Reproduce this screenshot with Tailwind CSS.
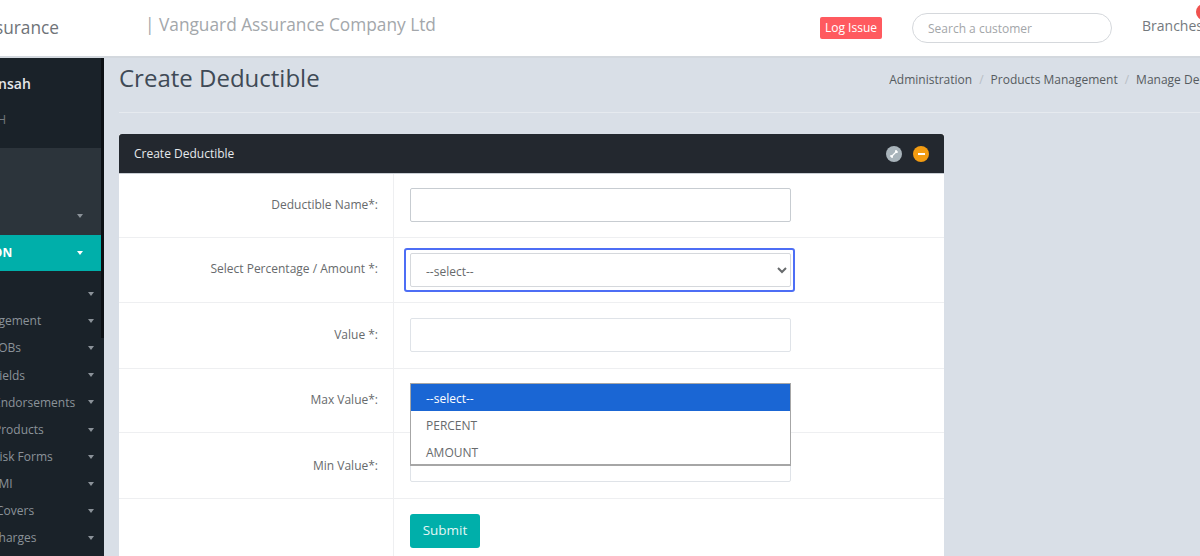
<!DOCTYPE html>
<html lang="en">
  <head>
    <meta charset="UTF-8" />
    <title>Create Deductible</title>
    <script src="https://cdn.jsdelivr.net/npm/@tailwindcss/browser@4"></script>
  </head>
  <body class="h-[556px] overflow-hidden bg-[#d9dfe7] font-['Open_Sans',sans-serif] text-[12px] text-[#676a6c]">
    <!-- page is scrolled sideways by 136px -->
    <div class="w-[1400px] -ml-[136px]">
      <header class="flex h-[58px] items-center border-b-2 border-[#d3d8de] bg-white">
        <div class="w-[195px] text-right text-[17.3px] text-[#6f7378]">Vanguard Assurance</div>
        <div class="ml-[88px] -mt-[6px] w-[673px] text-[17.3px] text-[#a3a7ab]"><span class="-ml-[2px]">| Vanguard Assurance Company Ltd</span></div>
        <span class="flex h-[22px] w-[62px] items-center justify-center rounded-[2px] bg-[#ff5a5f] text-white">Log Issue</span>
        <input class="ml-[30px] h-[30px] w-[200px] rounded-full border border-[#d5d8dc] px-[15px] text-[12px] placeholder:text-[#a3a6a9]" placeholder="Search a customer" />
        <div class="relative ml-[30px] -mt-[5px] text-[14px] text-[#74797e]">
          Branches
          <span class="absolute -top-[11px] left-[54px] h-[16px] w-[16px] rounded-full bg-[#f0524f]"></span>
        </div>
      </header>
      <div class="flex">
        <aside class="relative h-[498px] w-[240px] shrink-0 overflow-hidden bg-[#1a2229] text-[#8b9299]">
          <div class="h-[90px] pl-[83px] pt-[15px]">
            <div class="text-[14px] font-semibold text-[#e4e7ea]">Kofi Mensah</div>
            <div class="mt-[17px] pl-[11px] text-[12px] text-[#73797f]">BRANCH</div>
          </div>
          <div class="relative h-[87px] w-[237px] bg-[#2c343b]">
            <span class="absolute left-[213px] top-[66px] h-0 w-0 border-x-[3.5px] border-t-[4px] border-x-transparent border-t-[#8b9299]"></span>
          </div>
          <div class="flex h-[36px] w-[237px] items-center justify-between bg-[#00afaa] pl-[22px] pr-[18px] text-[12px] font-bold text-white">
            <span class="pl-[20px]">ADMINISTRATION</span>
            <span class="h-0 w-0 border-x-[3.5px] border-t-[4px] border-x-transparent border-t-white"></span>
          </div>
          <ul class="mt-[9px] w-[237px]">
            <li class="flex h-[27.2px] items-center justify-between pr-[7px]"><span class="ml-[40px]">Setup</span><span class="h-0 w-0 border-x-[3.5px] border-t-[4px] border-x-transparent border-t-[#8b9299]"></span></li>
            <li class="flex h-[27.2px] items-center justify-between pr-[7px]"><span class="ml-[68px] pt-[1px]">Users Management</span><span class="h-0 w-0 border-x-[3.5px] border-t-[4px] border-x-transparent border-t-[#8b9299]"></span></li>
            <li class="flex h-[27.2px] items-center justify-between pr-[7px]"><span class="ml-[128px]">LOBs</span><span class="h-0 w-0 border-x-[3.5px] border-t-[4px] border-x-transparent border-t-[#8b9299]"></span></li>
            <li class="flex h-[27.2px] items-center justify-between pr-[7px]"><span class="ml-[129px] pt-[1px]">Fields</span><span class="h-0 w-0 border-x-[3.5px] border-t-[4px] border-x-transparent border-t-[#8b9299]"></span></li>
            <li class="flex h-[27.2px] items-center justify-between pr-[7px]"><span class="ml-[130px] pt-[1px]">Endorsements</span><span class="h-0 w-0 border-x-[3.5px] border-t-[4px] border-x-transparent border-t-[#8b9299]"></span></li>
            <li class="flex h-[27.2px] items-center justify-between pr-[7px]"><span class="ml-[130px] pt-[1px]">Products</span><span class="h-0 w-0 border-x-[3.5px] border-t-[4px] border-x-transparent border-t-[#8b9299]"></span></li>
            <li class="flex h-[27.2px] items-center justify-between pr-[7px]"><span class="ml-[128px]">Risk Forms</span><span class="h-0 w-0 border-x-[3.5px] border-t-[4px] border-x-transparent border-t-[#8b9299]"></span></li>
            <li class="flex h-[27.2px] items-center justify-between pr-[7px]"><span class="ml-[128px]">SMI</span><span class="h-0 w-0 border-x-[3.5px] border-t-[4px] border-x-transparent border-t-[#8b9299]"></span></li>
            <li class="flex h-[27.2px] items-center justify-between pr-[7px]"><span class="ml-[132px]">Covers</span><span class="h-0 w-0 border-x-[3.5px] border-t-[4px] border-x-transparent border-t-[#8b9299]"></span></li>
            <li class="flex h-[27.2px] items-center justify-between pr-[7px]"><span class="ml-[127px]">Charges</span><span class="h-0 w-0 border-x-[3.5px] border-t-[4px] border-x-transparent border-t-[#8b9299]"></span></li>
          </ul>
          <div class="absolute left-[237px] top-0 h-[280px] w-[3px] bg-[#0c1014]"></div>
        </aside>
        <main class="w-[1156px] pl-[15px]">
          <div class="flex h-[55px] items-start justify-between border-b border-[#e6eaef]">
            <h1 class="pt-[1px] text-[24px] leading-[38px] text-[#3f4a56]">Create Deductible</h1>
            <nav class="flex gap-[7px] pr-[10px] pt-[12.5px] text-[12px] text-[#565b60]">
              <span>Administration</span><span class="text-[#b8bec5]">/</span>
              <span>Products Management</span><span class="text-[#b8bec5]">/</span>
              <span>Manage Deductibles</span>
            </nav>
          </div>
          <section class="mt-[21px] w-[825px] bg-white">
            <div class="flex h-[40px] items-center justify-between rounded-t-[3px] border-b border-[#c9ced4] bg-[#23282f] pl-[15px] pr-[15px] text-[12px] text-[#e6e9ec]">
              <span>Create Deductible</span>
              <div class="flex gap-[11px]">
                <span class="flex h-[16px] w-[16px] items-center justify-center rounded-full bg-[#a9b4bb]">
                  <svg viewBox="0 0 16 16" class="h-[16px] w-[16px]"><path d="M5 11 11 5M5 11h2M5 11V9M11 5H9M11 5v2" fill="none" stroke="#fff" stroke-width="1.3" /></svg>
                </span>
                <span class="flex h-[16px] w-[16px] items-center justify-center rounded-full bg-[#f39c12]">
                  <span class="h-[2px] w-[7px] bg-white"></span>
                </span>
              </div>
            </div>
            <div class="grid h-[64px] grid-cols-[275px_1fr] border-b border-[#eeeff1]">
              <label class="flex items-center justify-end border-r border-[#eeeff1] pr-[15px] pb-[1px]">Deductible Name*:</label>
              <div class="px-[16px] pt-[14px]"><input class="h-[34px] w-[381px] rounded-[2px] border border-[#c7ccd1]" /></div>
            </div>
            <div class="grid h-[65px] grid-cols-[275px_1fr] border-b border-[#eeeff1]">
              <label class="flex items-center justify-end border-r border-[#eeeff1] pr-[15px] pb-[2px]">Select Percentage / Amount *:</label>
              <div class="-ml-[1px] pl-[11px] pt-[10px]">
                <div class="h-[44px] w-[391px] rounded-[3px] border-2 border-[#4d6ef5] pl-[4px] pt-[3px]">
                  <select class="h-[34px] w-[381px] rounded-[2px] border border-[#d5d8dc] bg-white pl-[11px] pt-[2px] text-[12px] text-[#676a6c]"><option>--select--</option></select>
                </div>
              </div>
            </div>
            <div class="grid h-[66px] grid-cols-[275px_1fr] border-b border-[#eeeff1]">
              <label class="flex items-center justify-end border-r border-[#eeeff1] pr-[15px] pb-[1px]">Value *:</label>
              <div class="px-[16px] pt-[15px]"><input class="h-[34px] w-[381px] rounded-[2px] border border-[#dfe3e8]" /></div>
            </div>
            <div class="grid h-[64px] grid-cols-[275px_1fr] border-b border-[#eeeff1]">
              <label class="flex items-center justify-end border-r border-[#eeeff1] pr-[15px] pb-[1px]">Max Value*:</label>
              <div class="relative px-[16px] pt-[14px]">
                <ul class="absolute left-[16px] top-[14px] z-10 h-[83px] w-[381px] border border-b-2 border-[#a6a6a6] bg-white text-[12px]">
                  <li class="flex h-[27px] items-center bg-[#1a66d4] pl-[15px] pt-[2px] text-white">--select--</li>
                  <li class="flex h-[26.5px] items-center pl-[15px] pt-[3px]">PERCENT</li>
                  <li class="flex h-[26.5px] items-center pl-[15px] pt-[4px]">AMOUNT</li>
                </ul>
              </div>
            </div>
            <div class="grid h-[66px] grid-cols-[275px_1fr] border-b border-[#eeeff1]">
              <label class="flex items-center justify-end border-r border-[#eeeff1] pr-[15px]">Min Value*:</label>
              <div class="px-[16px] pt-[15px]"><input class="h-[34px] w-[381px] rounded-[2px] border border-[#dfe3e8]" /></div>
            </div>
            <div class="grid h-[70px] grid-cols-[275px_1fr]">
              <div class="border-r border-[#eeeff1]"></div>
              <div class="px-[16px] pt-[15px]"><button class="h-[34px] w-[70px] rounded-[3px] bg-[#00afaa] pb-[2px] text-[13.5px] text-[#e3f6f5]">Submit</button></div>
            </div>
          </section>
        </main>
      </div>
    </div>
  </body>
</html>
